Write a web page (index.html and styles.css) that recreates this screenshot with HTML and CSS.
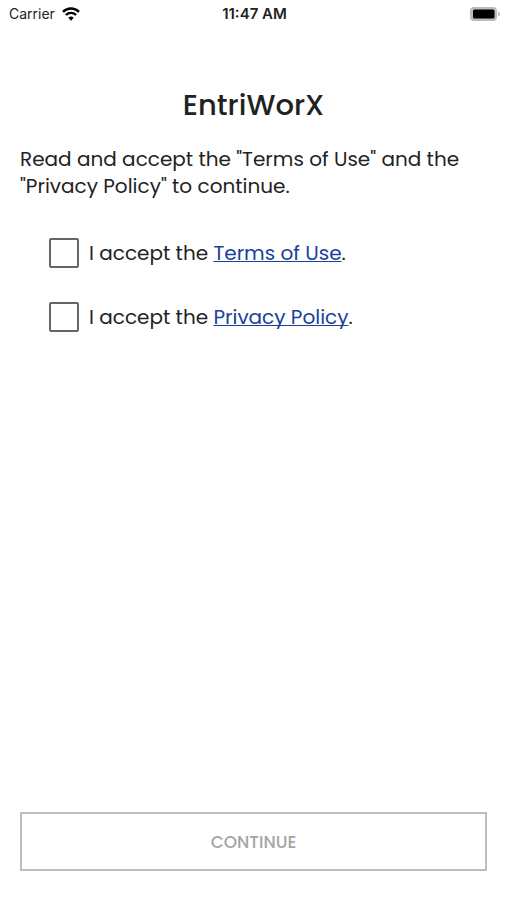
FILE: index.html
```html
<!DOCTYPE html>
<html lang="en">
<head>
<meta charset="utf-8">
<meta name="viewport" content="width=device-width, initial-scale=1">
<title>EntriWorX</title>
<link rel="stylesheet" href="styles.css">
</head>
<body>
<header class="status">
  <div class="carrier">
    <span>Carrier</span>
    <svg class="wifi" viewBox="0 0 18 14" aria-hidden="true"><path d="M1 4.8a11.5 11.5 0 0 1 16 0M3.9 8a7.3 7.3 0 0 1 10.2 0"/><path class="dot" d="M9 13.7 6.3 10.8a4 4 0 0 1 5.4 0z"/></svg>
  </div>
  <time class="clock">11:47 AM</time>
  <svg class="battery" viewBox="0 0 30 14" aria-hidden="true"><rect class="shell" width="27" height="14" rx="4"/><rect x="3" y="2.5" width="21.500" height="9" rx="1.500"/><path class="shell" d="M28 4.500q2 .6 2 2.500t-2 2.500z"/></svg>
</header>
<main class="page">
  <h1>EntriWorX</h1>
  <p>Read and accept the "Terms of Use" and the "Privacy Policy" to continue.</p>
  <form class="consent">
    <div class="option">
      <input type="checkbox" id="terms">
      <label for="terms">I accept the <a href="#terms">Terms of Use</a>.</label>
    </div>
    <div class="option">
      <input type="checkbox" id="privacy">
      <label for="privacy">I accept the <a href="#privacy">Privacy Policy</a>.</label>
    </div>
    <button type="submit" disabled>CONTINUE</button>
  </form>
</main>
</body>
</html>
```
FILE: styles.css
```css
* { box-sizing: border-box; }
body {
  margin: 0;
  min-height: 100vh;
  display: flex;
  flex-direction: column;
  background: #fff;
  color: #222;
  font-family: Poppins, Lato, sans-serif;
  font-size: 20px;
  line-height: 27px;
}
.status {
  display: grid;
  grid-template-columns: 1fr auto 1fr;
  align-items: center;
  height: 28px;
  padding: 0 7px 0 9px;
  font: 14px/20px Inter, sans-serif;
  color: #222;
}
.carrier { display: flex; align-items: center; gap: 7px; }
.wifi { width: 18px; height: 14px; fill: none; stroke: #000; stroke-width: 2.4; }
.wifi .dot { fill: #000; stroke: none; }
.clock { font-size: 15px; font-weight: 600; }
.battery { width: 30px; height: 14px; justify-self: end; }
.battery .shell { fill: #bbb; }
.page {
  flex: 1;
  display: flex;
  flex-direction: column;
  padding: 56px 20px 29px;
}
h1 {
  margin: 0;
  text-align: center;
  font-size: 29px;
  line-height: 42px;
  font-weight: 500;
}
p { margin: 20px 0 0; }
.consent { flex: 1; display: flex; flex-direction: column; margin-top: 37px; }
.option { display: flex; align-items: center; gap: 10px; height: 32px; margin: 0 0 32px 29px; }
input {
  appearance: none;
  width: 30px;
  height: 30px;
  margin: 0;
  border: 2px solid #666;
  border-radius: 2px;
  background: #fff;
}
a {
  color: #17429b;
  text-decoration-thickness: 1px;
  text-underline-offset: 1px;
  text-decoration-skip-ink: none;
}
button {
  margin-top: auto;
  height: 59px;
  border: 2px solid #bdbdbd;
  background: #fff;
  color: #a5a5a5;
  font: 500 17px/24px Poppins, Lato, sans-serif;
}
```
